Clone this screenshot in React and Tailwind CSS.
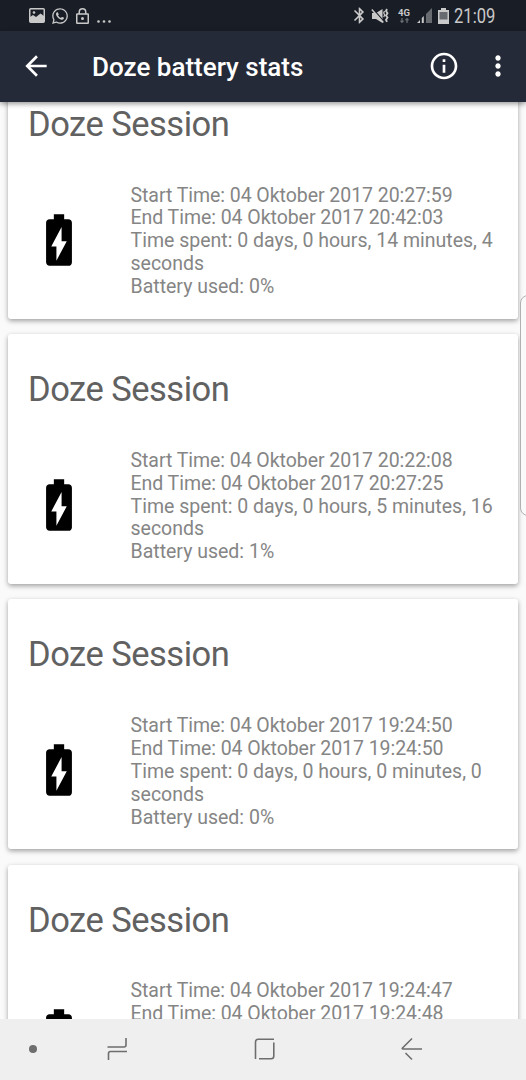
import React from 'react';
import { MdArrowBack, MdBluetooth, MdInfoOutline, MdMoreVert } from 'react-icons/md';
import { FaWhatsapp } from 'react-icons/fa';

const sessions = [
  {
    start: '04 Oktober 2017 20:27:59',
    end: '04 Oktober 2017 20:42:03',
    spent: '0 days, 0 hours, 14 minutes, 4 seconds',
    used: '0%'
  },
  {
    start: '04 Oktober 2017 20:22:08',
    end: '04 Oktober 2017 20:27:25',
    spent: '0 days, 0 hours, 5 minutes, 16 seconds',
    used: '1%'
  },
  {
    start: '04 Oktober 2017 19:24:50',
    end: '04 Oktober 2017 19:24:50',
    spent: '0 days, 0 hours, 0 minutes, 0 seconds',
    used: '0%'
  },
  {
    start: '04 Oktober 2017 19:24:47',
    end: '04 Oktober 2017 19:24:48',
    spent: '0 days, 0 hours, 0 minutes, 1 seconds',
    used: '0%'
  }
];

function BatteryIcon() {
  return (
    <svg viewBox="0 0 24 24" className="mb-1 h-[62px] w-[62px] shrink-0 fill-black">
      <path d="M15.67 4H14V2h-4v2H8.33C7.6 4 7 4.6 7 5.33v15.33C7 21.4 7.6 22 8.33 22h7.33c.74 0 1.34-.6 1.34-1.33V5.33C17 4.6 16.4 4 15.67 4zM11 20v-5.5H9L13 7v5.5h2L11 20z" />
    </svg>
  );
}

function StatusBar() {
  return (
    <div className="flex h-[31px] shrink-0 items-center bg-[#191d26] pr-[30px] pl-[29px] text-[#c9c9c9]">
      <svg viewBox="0 0 16 15" className="h-[15px] w-4">
        <rect x="0.75" y="0.75" width="14.5" height="13.5" rx="1" fill="none" stroke="currentColor" strokeWidth="1.5" />
        <path d="M1 10V9l3-2 3 2 4.500-3.500L15 8v6H1z" fill="currentColor" />
        <circle cx="5" cy="4.500" r="1.300" fill="currentColor" />
      </svg>
      <FaWhatsapp className="ml-[6px] h-[18px] w-[18px]" />
      <svg viewBox="0 0 13 16" className="ml-[7px] h-4 w-[13px]" fill="none" stroke="currentColor" strokeWidth="1.5">
        <rect x="0.75" y="6" width="11.500" height="9.250" rx="0.500" />
        <path d="M3.250 6V4a3.250 3.250 0 0 1 6.500 0v2" />
        <circle cx="6.500" cy="10.500" r="1.500" fill="currentColor" stroke="none" />
      </svg>
      <svg viewBox="0 0 14 3" className="mt-[11px] ml-2 h-[3px] w-3.5" fill="currentColor">
        <circle cx="1.500" cy="1.500" r="1.300" />
        <circle cx="7" cy="1.500" r="1.300" />
        <circle cx="12.500" cy="1.500" r="1.300" />
      </svg>

      <MdBluetooth className="ml-auto h-[19px] w-[19px]" />
      {/* muted, vibrate on */}
      <svg viewBox="0 0 18 16" className="ml-[2px] h-4 w-[18px]" fill="none" stroke="currentColor">
        <path d="M1 5h4l6.500-4v14L5 11H1z" fill="currentColor" stroke="none" />
        <path d="M2 1l10.500 12" stroke="#191d26" strokeWidth="1.200" />
        <path d="M0.800 1.500l11.500 13" strokeWidth="1.500" />
        <path d="M16 1l-1 2 1.500 2.200-1.500 2.200 1.500 2.200-1.500 2.200 1 2" strokeWidth="1.800" />
        <path d="M13.500 3l-.8 2 1 2-1 2" strokeWidth="1.200" />
      </svg>
      <div className="ml-[9px] flex w-3 flex-col items-center">
        <span className="text-[9.5px] leading-[9px] font-bold">4G</span>
        <svg viewBox="0 0 9 5" className="mt-px h-[5px] w-[9px]" fill="none" stroke="#686b70" strokeWidth="1.3">
          <path d="M2 0v4M0.500 2.800L2 4.300l1.500-1.500M7 5V1M5.500 2.200L7 .7l1.500 1.500" />
        </svg>
      </div>
      <svg viewBox="0 0 15 15" className="ml-[7px] h-[15px] w-[15px]">
        <path d="M0 15l3-3v3zM4.800 15v-5l2-2v7z" fill="currentColor" />
        <path d="M9 15V6L15 0v15z" fill="#686b70" />
      </svg>
      <svg viewBox="0 0 11 16" className="ml-[6px] h-4 w-[11px]">
        <path d="M3 0h5v2h3v14H0V2h3z" fill="currentColor" />
        <path d="M1.500 4h8v7.500h-8z" fill="#686b70" />
      </svg>
      <span className="mt-0.5 ml-[5px] w-[42px] origin-left scale-x-[0.85] text-[19.5px] leading-5 whitespace-nowrap">21:09</span>
    </div>
  );
}

function AppBar() {
  return (
    <header className="relative z-10 flex h-[71px] shrink-0 items-center bg-[#252a38] pr-[12px] pb-px pl-[20px] text-white shadow-[0_2px_5px_rgba(0,0,0,0.4)]">
      <MdArrowBack className="h-8 w-8" />
      <h1 className="mt-px ml-10 text-[26px] leading-8 font-medium">Doze battery stats</h1>
      <MdInfoOutline className="ml-auto h-8 w-8" />
      <MdMoreVert className="ml-[22px] h-8 w-8" />
    </header>
  );
}

function SessionCard({ session }) {
  return (
    <article className="h-[250px] rounded-[3px] bg-white pt-[34px] pr-4 pl-5 shadow-[0_2px_5px_rgba(0,0,0,0.36)]">
      <h2 className="text-[34.5px] leading-[42px] tracking-[-0.5px] text-[#616161]">Doze Session</h2>
      <div className="mt-[39.5px] flex items-center">
        <BatteryIcon />
        <div className="ml-[40.5px] text-[19.5px] leading-[22.9px] text-[#858585]">
          <p className="tracking-[-0.05px]">Start Time: {session.start}</p>
          <p className="tracking-[-0.05px]">End Time: {session.end}</p>
          <p>Time spent: {session.spent}</p>
          <p>Battery used: {session.used}</p>
        </div>
      </div>
    </article>
  );
}

function NavBar() {
  return (
    <nav className="flex h-[61px] shrink-0 items-center bg-[#efefef] pb-0.5 pl-[29px]">
      <span className="h-2 w-2 rounded-full bg-[#6e6e6e]" />
      <svg viewBox="0 0 22 24" className="ml-[70px] h-6 w-[22px]" fill="none" stroke="#6e6e6e" strokeWidth="1.6">
        <path d="M0.500 10h16.500q2 0 2-2V1M20 14.500H3.500q-2 0-2 2V23" />
      </svg>
      <svg viewBox="0 0 22 22" className="ml-[124px] h-[22px] w-[22px]" fill="none" stroke="#6e6e6e" strokeWidth="1.6">
        <path d="M2.500 21V4q0-2.700 2.700-2.700H21M20.800 4.500V18q0 2.700-2.700 2.700H6" />
      </svg>
      <svg viewBox="0 0 22 24" className="ml-[126px] h-6 w-[22px]" fill="none" stroke="#6e6e6e" strokeWidth="1.6">
        <path d="M11 1.500L1.500 11q-.8 1 .5 1h19M4.500 16l6.500 6.500" />
      </svg>
    </nav>
  );
}

export default function App() {
  return (
    <div className="relative flex h-[1080px] w-[526px] flex-col overflow-hidden bg-[#fafafa] font-['Roboto',sans-serif]">
      <StatusBar />
      <AppBar />
      <main className="min-h-0 flex-1 overflow-hidden px-2">
        <div className="-mt-[33px] flex flex-col gap-[15.2px]">
          {sessions.map((s) => (
            <SessionCard key={s.start} session={s} />
          ))}
        </div>
      </main>
      <NavBar />
      {/* edge panel handle */}
      <div className="absolute top-[295px] -right-2.5 h-[221px] w-4 rounded-lg border border-[#b0b0b0] bg-[#fafafa]" />
    </div>
  );
}
